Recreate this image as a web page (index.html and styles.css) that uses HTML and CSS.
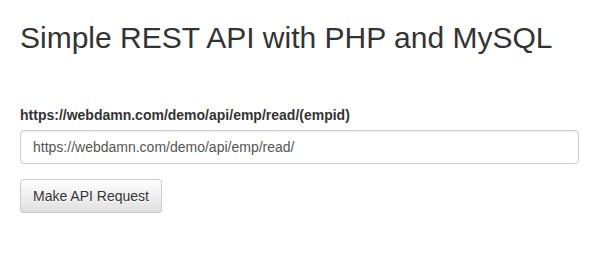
FILE: index.html
```html
<!DOCTYPE html>
<html lang="en">
<head>
<meta charset="utf-8">
<title>Simple REST API with PHP and MySQL</title>
<link rel="stylesheet" href="styles.css">
</head>
<body>
<div class="container">
  <h2 class="title">Simple REST API with PHP and MySQL</h2>
  <form class="api-form">
    <div class="form-group">
      <label class="field-label" for="url">https://webdamn.com/demo/api/emp/read/(empid)</label>
      <input class="form-control" id="url" type="text" value="https://webdamn.com/demo/api/emp/read/">
    </div>
    <button type="button" class="btn">Make API Request</button>
  </form>
</div>
</body>
</html>
```
FILE: styles.css
```css
* { box-sizing: border-box; }
html, body { margin: 0; padding: 0; background: #fff; }
body {
  font-family: "Liberation Sans", Arial, Helvetica, sans-serif;
  font-size: 14px;
  line-height: 20px;
  color: #333;
}
.container {
  padding: 0 23px 0 20px;
}
.title {
  margin: 21px 0 0;
  font-size: 30px;
  line-height: 33px;
  font-weight: normal;
  color: #333;
}
.api-form {
  margin-top: 51px;
}
.form-group {
  margin-bottom: 15px;
}
.field-label {
  display: inline-block;
  font-weight: bold;
  margin-bottom: 5px;
}
.form-control {
  display: block;
  width: 100%;
  height: 34px;
  padding: 6px 12px;
  font-family: inherit;
  font-size: 14px;
  line-height: 20px;
  color: #555;
  background: #fff;
  border: 1px solid #ccc;
  border-radius: 4px;
  box-shadow: inset 0 1px 1px rgba(0,0,0,.075);
  outline: none;
}
.btn {
  display: inline-block;
  height: 34px;
  padding: 6px 12px;
  font-family: inherit;
  font-size: 14px;
  line-height: 20px;
  color: #333;
  background-color: #e0e0e0;
  background-image: linear-gradient(to bottom, #fff 0, #e0e0e0 100%);
  border: 1px solid #ccc;
  border-radius: 4px;
  text-shadow: 0 1px 0 #fff;
  box-shadow: inset 0 1px 0 rgba(255,255,255,.15), 0 1px 1px rgba(0,0,0,.075);
  cursor: pointer;
}
```
